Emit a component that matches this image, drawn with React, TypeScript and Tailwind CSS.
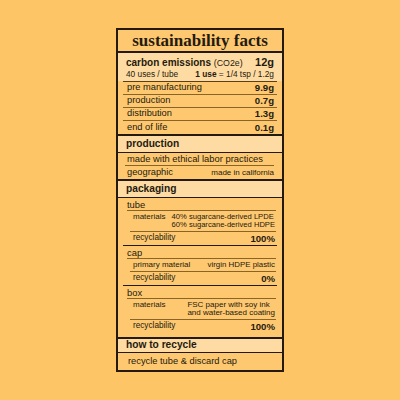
const sans = { fontFamily: '"Liberation Sans", Arial, sans-serif' };

const emissions = [
  { label: "pre manufacturing", value: "9.9g" },
  { label: "production", value: "0.7g" },
  { label: "distribution", value: "1.3g" },
  { label: "end of life", value: "0.1g" },
];

const packaging = [
  {
    name: "tube",
    rows: [
      {
        label: "materials",
        value: ["40% sugarcane-derived LPDE", "60% sugarcane-derived HDPE"],
        size: "text-[7.6px]",
      },
    ],
    recyclability: "100%",
  },
  {
    name: "cap",
    rows: [{ label: "primary material", value: ["virgin HDPE plastic"], size: "text-[7.9px]" }],
    recyclability: "0%",
  },
  {
    name: "box",
    rows: [
      {
        label: "materials",
        value: ["FSC paper with soy ink", "and water-based coating"],
        size: "text-[8px]",
      },
    ],
    recyclability: "100%",
  },
];

const Header = ({ title, short }: { title: string; short?: boolean }) => (
  <div
    className={`border-t-2 border-b border-[#241a0f] bg-[#fedba2] px-2 flex items-center ${
      short ? "h-[16px]" : "h-[19px]"
    }`}
  >
    <span className="font-bold text-[10.2px] leading-none">{title}</span>
  </div>
);

const App = () => {
  return (
    <div className="w-[400px] h-[400px] bg-[#fec566] flex justify-center pt-[28px] text-[#241a0f]" style={sans}>
      <div className="w-[168px] h-[344px] border-2 border-[#241a0f] bg-[#fec870] flex flex-col">
        <div className="h-[23px] flex items-center justify-center border-b-2 border-[#241a0f]">
          <span
            className="font-bold text-[17px] leading-none"
            style={{ fontFamily: '"Liberation Serif", "Times New Roman", serif' }}
          >
            sustainability facts
          </span>
        </div>

        <div className="bg-[#fedba2] px-2 pt-[4px] h-[28px] shrink-0">
          <div className="flex justify-between items-baseline leading-none">
            <span className="font-bold text-[10px]">
              carbon emissions <span className="font-normal text-[8.8px]">(CO2e)</span>
            </span>
            <span className="font-bold text-[11px]">12g</span>
          </div>
          <div className="flex justify-between text-[8.3px] leading-none mt-[2px]">
            <span>40 uses / tube</span>
            <span>
              <span className="font-bold">1 use</span> = 1/4 tsp / 1.2g
            </span>
          </div>
        </div>

        <div className="mx-[5px] border-t border-[#5c3f17]">
          {emissions.map((r, i) => (
            <div
              key={r.label}
              className={`flex justify-between items-center h-[13px] pl-[4px] pr-[3px] text-[9.3px] leading-none ${
                i < emissions.length - 1 ? "border-b border-[#8a6326]" : ""
              }`}
            >
              <span>{r.label}</span>
              <span className="font-bold text-[9.6px]">{r.value}</span>
            </div>
          ))}
        </div>

        <Header title="production" />
        <div className="mx-[5px] pl-[4px] pr-[3px]">
          <div className="h-[13px] flex items-center text-[9.4px] leading-none border-b border-[#8a6326] -ml-[2px] pl-[2px]">
            made with ethical labor practices
          </div>
          <div className="h-[13px] flex items-center justify-between leading-none">
            <span className="text-[9.3px]">geographic</span>
            <span className="text-[8px]">made in california</span>
          </div>
        </div>

        <Header title="packaging" />
        <div className="pt-[1px] pb-[4px] px-[5px]">
          {packaging.map((p, pi) => (
            <div
              key={p.name}
              className={pi < packaging.length - 1 ? "border-b-[1.5px] border-[#241a0f] mb-[1px]" : ""}
            >
              <div className="ml-[4px] mr-[1px] h-[12px] flex items-center text-[9.4px] leading-none border-b border-[#8a6326]">
                {p.name}
              </div>
              <div className="ml-[7px] mr-[1px]">
                {p.rows.map((r) => (
                  <div
                    key={r.label}
                    className="flex justify-between py-[2px] text-[8px] leading-[8px] border-b border-[#8a6326]"
                  >
                    <span className="pl-[3px]">{r.label}</span>
                    <span className={`text-left pr-[1px] ${r.size}`}>
                      {r.value.map((v) => (
                        <span key={v} className="block">
                          {v}
                        </span>
                      ))}
                    </span>
                  </div>
                ))}
                <div className="flex justify-between items-center h-[13px] leading-none">
                  <span className="pl-[3px] text-[8.2px]">recyclability</span>
                  <span className="font-bold text-[9.6px] pr-[1px]">{p.recyclability}</span>
                </div>
              </div>
            </div>
          ))}
        </div>

        <Header title="how to recycle" short />
        <div className="flex-1 flex items-center px-[10px] text-[9.3px] leading-none">
          recycle tube &amp; discard cap
        </div>
      </div>
    </div>
  );
};

export default App;
